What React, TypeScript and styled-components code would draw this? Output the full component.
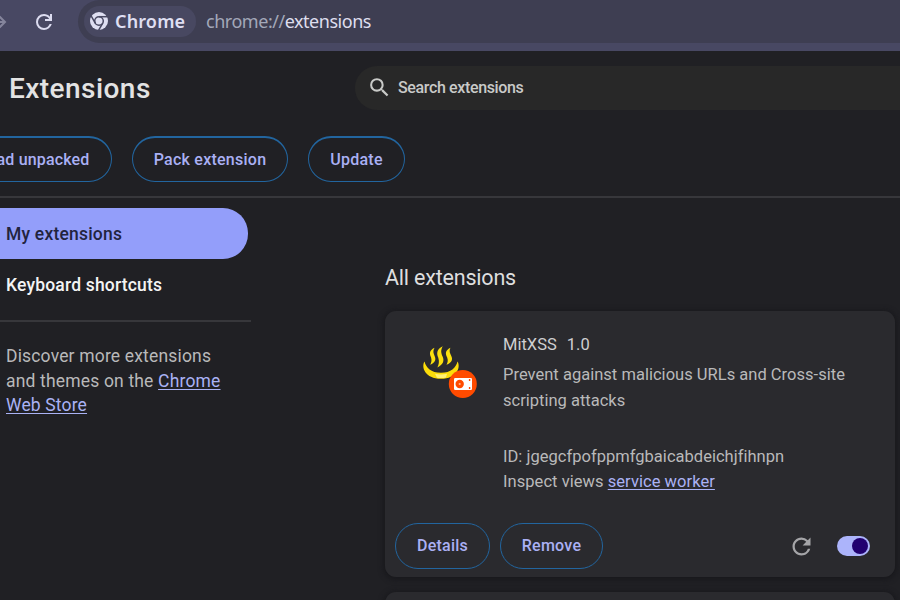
import React from "react";
import styled, { createGlobalStyle } from "styled-components";

const Global = createGlobalStyle`
  * { box-sizing: border-box; }
  body { margin: 0; background: #202024; font-family: Roboto, sans-serif; overflow: hidden; }
`;

const Page = styled.div`
  width: 900px;
  height: 600px;
  overflow: hidden;
  display: flex;
  flex-direction: column;
  background: #202024;
  color: #e3e3e3;
`;

const Toolbar = styled.div`
  height: 51px;
  flex: none;
  display: flex;
  align-items: flex-start;
  background: #484863;
`;

const NavIcons = styled.div`
  width: 78px;
  height: 43px;
  display: flex;
  align-items: center;
  flex: none;
  color: #dcdcf0;
  svg { display: block; flex: none; }
`;

const ForwardIcon = styled.svg`
  margin-left: -12px;
  color: #85859c;
`;

const ToolbarReload = styled.svg`
  margin-left: 24px;
`;

const Omnibox = styled.div`
  height: 43px;
  flex: 1;
  display: flex;
  align-items: center;
  padding-left: 6px;
  border-radius: 22px 0 0 22px;
  background: #3e3e52;
  font-family: "Noto Sans", sans-serif;
  white-space: nowrap;
`;

const Chip = styled.div`
  width: 112px;
  height: 31px;
  display: flex;
  align-items: center;
  gap: 7px;
  padding-left: 6px;
  border-radius: 16px;
  background: #484861;
  color: #dfdff2;
  font-size: 18px;
  line-height: 29px;
  padding-bottom: 1px;
  font-weight: 600;
  svg { flex: none; }
`;

const Spaced = styled.span<{ $ls?: number }>`
  letter-spacing: ${(p) => p.$ls ?? 0}px;
`;

const Url = styled.div`
  margin-left: 10px;
  padding-bottom: 2px;
  font-size: 18px;
  letter-spacing: -0.47px;
  color: #dedeee;
`;

const Scheme = styled.span`
  color: #a3a8b9;
`;

const Header = styled.div`
  height: 76px;
  flex: none;
  display: flex;
  padding-top: 15px;
`;

const Title = styled.h1`
  width: 355px;
  margin: 0;
  padding-left: 9px;
  flex: none;
  font-size: 28px;
  line-height: 46px;
  font-weight: 500;
  white-space: nowrap;
`;

const Search = styled.div`
  height: 44px;
  flex: 1;
  display: flex;
  align-items: center;
  gap: 6px;
  padding: 0 0 1px 12px;
  border-radius: 22px 0 0 22px;
  background: #282828;
  color: #c9cac8;
  font-size: 16px;
  font-weight: 500;
`;

const Actions = styled.div`
  height: 71px;
  flex: none;
  display: flex;
  align-items: flex-start;
  gap: 20px;
  padding-top: 9px;
  margin-left: -44px;
  border-bottom: 2px solid #37373b;
`;

const OutlineButton = styled.button<{ $w: number }>`
  width: ${(p) => p.$w}px;
  height: 46px;
  flex: none;
  padding: 0;
  border: 1px solid #22659f;
  border-top-width: 2px;
  border-radius: 23px;
  background: transparent;
  color: #aab0f4;
  font: 500 16px/43px Roboto, sans-serif;
  white-space: nowrap;
`;

const CardButton = styled(OutlineButton)`
  border-top-width: 1px;
  padding-bottom: 1px;
`;

const Body = styled.div`
  flex: 1;
  display: flex;
  min-height: 0;
`;

const Sidebar = styled.nav`
  width: 251px;
  flex: none;
  padding-top: 10px;
`;

const NavItem = styled.div<{ $active?: boolean }>`
  width: 248px;
  height: 51px;
  padding-left: 6px;
  border-radius: 0 25px 25px 0;
  font-size: 17.5px;
  line-height: 53px;
  font-weight: 500;
  white-space: nowrap;
  background: ${(p) => (p.$active ? "#939efa" : "transparent")};
  color: ${(p) => (p.$active ? "#22243e" : "#f4f4f4")};
`;

const Rule = styled.div`
  height: 2px;
  margin-top: 10px;
  background: #37373b;
`;

const Promo = styled.p`
  margin: 22px 0 0;
  padding-left: 6px;
  font-size: 17.5px;
  line-height: 24.5px;
  color: #b9b9ba;
  white-space: nowrap;
`;

const Link = styled.a`
  color: #aab2f5;
  text-decoration: underline;
  text-decoration-thickness: 1px;
  text-underline-offset: 2px;
`;

const Content = styled.main`
  width: 510px;
  margin-left: 134px;
  flex: none;
`;

const SectionTitle = styled.h2`
  margin: 0;
  padding-top: 64px;
  height: 113px;
  font-size: 21.5px;
  line-height: 32px;
  font-weight: 400;
  color: #dededf;
`;

const Card = styled.section`
  height: 266px;
  margin-bottom: 15px;
  display: flex;
  flex-direction: column;
  border-radius: 11px;
  background: #2a2a2e;
  box-shadow: 0 1px 5px 2px #19191d;
`;

const CardInfo = styled.div`
  height: 212px;
  display: flex;
`;

const IconSlot = styled.div`
  width: 118px;
  flex: none;
  padding: 32px 0 0 35px;
`;

const Details = styled.div`
  padding-top: 21px;
  font-size: 16.5px;
  line-height: 25.5px;
  color: #b9b9ba;
  white-space: nowrap;
`;

const Name = styled.div`
  display: flex;
  gap: 10px;
  margin-bottom: 4.5px;
  color: #cfcfd1;
`;

const Meta = styled.div`
  margin-top: 30.5px;
`;

const CardActions = styled.div`
  height: 46px;
  display: flex;
  align-items: center;
  gap: 10px;
  padding: 0 25px 0 10px;
`;

const ReloadSlot = styled.div`
  margin-left: auto;
  margin-right: 12px;
  display: flex;
  color: #a5a5a8;
`;

const Toggle = styled.div`
  width: 33px;
  height: 20px;
  display: flex;
  justify-content: flex-end;
  align-items: center;
  padding-right: 2.5px;
  border-radius: 10px;
  background: #acb4fb;
`;

const Knob = styled.div`
  width: 16px;
  height: 16px;
  border-radius: 50%;
  background: #210070;
`;

const ChromeLogo = () => (
  <svg width="18" height="18" viewBox="0 0 18 18">
    <circle cx="9" cy="9" r="9" fill="#dfdff2" />
    <circle cx="9" cy="9" r="4.3" fill="none" stroke="#484861" strokeWidth="1.5" />
    <g stroke="#484861" strokeWidth="1.5" fill="none">
      <path d="M9 4.7H17.6" />
      <path d="M5.28 11.15L.98 3.7" />
      <path d="M12.72 11.15L8.42 18.6" />
    </g>
  </svg>
);

const HotSpringLogo = () => (
  <svg width="58" height="58" viewBox="0 0 58 58">
    <g fill="#fbe00e">
      <path d="M14.5 4.8C9 7.5 9.5 10.8 11 14.2C12 17.3 11.4 19.4 10.2 21.8C15.2 19.6 16.2 16.6 14.7 13.2C13.2 9.8 12.8 8 14.5 4.8Z" />
      <path d="M22.8 3.2C16.2 6.4 16.6 10.6 18.3 14.8C19.5 18.6 18.8 21.6 17.4 24.6C23.4 21.6 24.4 17.6 22.6 13.6C20.9 9.5 20.6 7 22.8 3.2Z" />
      <path d="M30.4 4.8C24.9 7.5 25.4 10.8 27.1 14.2C28.3 17.3 27.7 19.4 26.5 21.8C31.9 19.6 32.9 16.6 31.4 13.2C29.7 9.8 28.9 8 30.4 4.8Z" />
    </g>
    <path d="M4.5 18.5C1 24 5 35.8 21 35.8S41 24 37.5 18.5C36 24.5 31 29.8 21 29.8S6 24.5 4.5 18.5Z" fill="#fbdc0a" />
    <path d="M15 30.7Q21 32.3 27 30.7L26 34.5Q21 35.5 17 34.7Z" fill="#fff176" />
    <circle cx="42.8" cy="41" r="14" fill="#ff4b00" />
    <rect x="34" y="35" width="18" height="12" rx="1.2" fill="#fff" />
    <circle cx="39.7" cy="41" r="4.2" fill="#ff4b00" />
    <circle cx="39.7" cy="41" r="1.1" fill="#ffb28e" />
    <path d="M49.6 36v2M49.6 44v2" stroke="#ff4b00" strokeWidth="1.4" />
  </svg>
);

export default function App() {
  return (
    <Page>
      <Global />
      <Toolbar>
        <NavIcons>
          <ForwardIcon width="20" height="20" viewBox="0 0 20 20" fill="none" stroke="currentColor" strokeWidth="2">
            <path d="M3 10H16M11.5 4.5L17 10L11.5 15.5" />
          </ForwardIcon>
          <ToolbarReload width="24" height="24" viewBox="0 0 24 24" fill="currentColor">
            <path d="M12 20q-3.35 0-5.675-2.325Q4 15.35 4 12q0-3.35 2.325-5.675Q8.65 4 12 4q1.725 0 3.3.712 1.575.713 2.7 2.038V4h2v7h-7V9h4.2q-.8-1.4-2.187-2.2Q13.625 6 12 6 9.5 6 7.75 7.75T6 12q0 2.5 1.75 4.25T12 18q1.925 0 3.475-1.1T17.65 14h2.1q-.7 2.65-2.85 4.325Q14.75 20 12 20Z" />
          </ToolbarReload>
        </NavIcons>
        <Omnibox>
          <Chip>
            <ChromeLogo />
            <Spaced $ls={0.15}>Chrome</Spaced>
          </Chip>
          <Url>
            <Scheme>chrome://</Scheme>extensions
          </Url>
        </Omnibox>
      </Toolbar>

      <Header>
        <Title><Spaced $ls={0.45}>Extensions</Spaced></Title>
        <Search>
          <svg width="25" height="25" viewBox="0 0 24 24" fill="currentColor">
            <path d="M15.5 14h-.79l-.28-.27A6.471 6.471 0 0 0 16 9.5 6.5 6.5 0 1 0 9.5 16c1.61 0 3.09-.59 4.23-1.57l.27.28v.79l5 4.99L20.49 19l-4.99-5zm-6 0C7.01 14 5 11.99 5 9.5S7.01 5 9.5 5 14 7.01 14 9.5 11.99 14 9.5 14z" />
          </svg>
          <Spaced $ls={-0.36}>Search extensions</Spaced>
        </Search>
      </Header>

      <Actions>
        <OutlineButton $w={156}><Spaced $ls={0.15}>Load unpacked</Spaced></OutlineButton>
        <OutlineButton $w={156}><Spaced $ls={0.25}>Pack extension</Spaced></OutlineButton>
        <OutlineButton $w={97}><Spaced $ls={0.25}>Update</Spaced></OutlineButton>
      </Actions>

      <Body>
        <Sidebar>
          <NavItem $active><Spaced $ls={0.2}>My extensions</Spaced></NavItem>
          <NavItem><Spaced $ls={0.18}>Keyboard shortcuts</Spaced></NavItem>
          <Rule />
          <Promo>
            <Spaced $ls={0.17}>Discover more extensions</Spaced>
            <br />
            <Spaced $ls={0.17}>and themes on the <Link>Chrome</Link></Spaced>
            <br />
            <Spaced $ls={0.15}><Link>Web Store</Link></Spaced>
          </Promo>
        </Sidebar>
        <Content>
          <SectionTitle><Spaced $ls={-0.2}>All extensions</Spaced></SectionTitle>
          <Card>
            <CardInfo>
              <IconSlot><HotSpringLogo /></IconSlot>
              <Details>
                <Name><Spaced>MitXSS</Spaced><Spaced>1.0</Spaced></Name>
                <div><Spaced $ls={0.02}>Prevent against malicious URLs and Cross-site</Spaced></div>
                <div><Spaced>scripting attacks</Spaced></div>
                <Meta>
                  <div><Spaced $ls={0.02}>ID: jgegcfpofppmfgbaicabdeichjfihnpn</Spaced></div>
                  <div><Spaced $ls={0.05}>Inspect views <Link>service worker</Link></Spaced></div>
                </Meta>
              </Details>
            </CardInfo>
            <CardActions>
              <CardButton $w={95}><Spaced $ls={0.25}>Details</Spaced></CardButton>
              <CardButton $w={103}><Spaced $ls={0.25}>Remove</Spaced></CardButton>
              <ReloadSlot>
                <svg width="27" height="27" viewBox="0 0 24 24" fill="currentColor">
                  <path d="M17.65 6.35A7.958 7.958 0 0 0 12 4c-4.42 0-7.99 3.58-7.99 8s3.57 8 7.99 8c3.73 0 6.84-2.55 7.73-6h-2.08A5.99 5.99 0 0 1 12 18c-3.31 0-6-2.69-6-6s2.69-6 6-6c1.66 0 3.14.69 4.22 1.78L13 11h7V4l-2.35 2.35z" />
                </svg>
              </ReloadSlot>
              <Toggle><Knob /></Toggle>
            </CardActions>
          </Card>
          <Card />
        </Content>
      </Body>
    </Page>
  );
}
